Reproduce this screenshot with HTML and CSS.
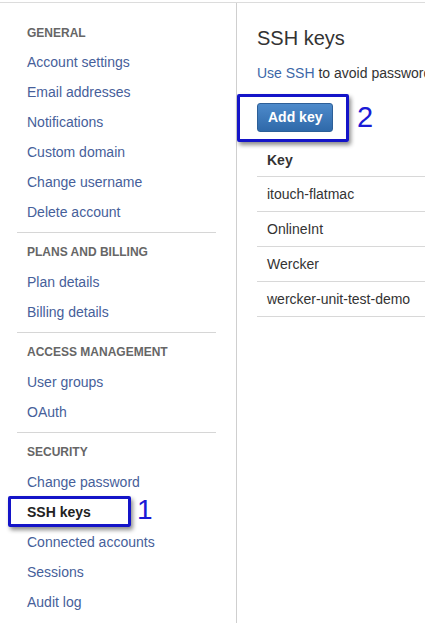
FILE: index.html
```html
<!DOCTYPE html>
<html lang="en">
<head>
<meta charset="utf-8">
<title>SSH keys</title>
<link rel="stylesheet" href="styles.css">
</head>
<body>
<div class="page">
  <nav class="sidebar">
    <section class="nav-section">
      <h3 class="nav-heading">GENERAL</h3>
      <ul class="nav-list">
        <li><a href="#">Account settings</a></li>
        <li><a href="#">Email addresses</a></li>
        <li><a href="#">Notifications</a></li>
        <li><a href="#">Custom domain</a></li>
        <li><a href="#">Change username</a></li>
        <li><a href="#">Delete account</a></li>
      </ul>
    </section>
    <section class="nav-section">
      <h3 class="nav-heading">PLANS AND BILLING</h3>
      <ul class="nav-list">
        <li><a href="#">Plan details</a></li>
        <li><a href="#">Billing details</a></li>
      </ul>
    </section>
    <section class="nav-section">
      <h3 class="nav-heading">ACCESS MANAGEMENT</h3>
      <ul class="nav-list">
        <li><a href="#">User groups</a></li>
        <li><a href="#">OAuth</a></li>
      </ul>
    </section>
    <section class="nav-section">
      <h3 class="nav-heading">SECURITY</h3>
      <ul class="nav-list">
        <li><a href="#">Change password</a></li>
        <li class="active"><span class="active-label">SSH keys</span><span class="annot annot-nav"></span><span class="annot-num num-1">1</span></li>
        <li><a href="#">Connected accounts</a></li>
        <li><a href="#">Sessions</a></li>
        <li><a href="#">Audit log</a></li>
      </ul>
    </section>
  </nav>
  <main class="content">
    <h2 class="title">SSH keys</h2>
    <p class="intro"><a href="#">Use SSH</a> to avoid password prompts when you push code to Bitbucket</p>
    <div class="add-key">
      <button class="btn">Add key</button>
      <span class="annot annot-btn"></span>
      <span class="annot-num num-2">2</span>
    </div>
    <table class="keys">
      <thead>
        <tr><th>Key</th></tr>
      </thead>
      <tbody>
        <tr><td>itouch-flatmac</td></tr>
        <tr><td>OnlineInt</td></tr>
        <tr><td>Wercker</td></tr>
        <tr><td>wercker-unit-test-demo</td></tr>
      </tbody>
    </table>
  </main>
</div>
</body>
</html>
```

FILE: styles.css
```css
html, body {
  margin: 0;
  padding: 0;
  background: #fff;
  overflow: hidden;
}
body {
  font-family: "Liberation Sans", Arial, Helvetica, sans-serif;
  font-size: 14px;
  color: #333;
  padding-top: 2px;
}
.page {
  display: flex;
  width: 720px;
  min-height: 621px;
  border-top: 1px solid #dcdcdc;
}
.sidebar {
  box-sizing: border-box;
  width: 237px;
  flex: none;
  padding: 16px 20px 0 17px;
  border-right: 1px solid #cfcfcf;
}
.nav-section + .nav-section {
  margin-top: 5px;
  padding-top: 5px;
  border-top: 1px solid #d6d6d6;
}
.nav-heading {
  margin: 0;
  padding-left: 10px;
  font-size: 12px;
  font-weight: bold;
  color: #666;
  line-height: 29px;
}
.nav-section:first-child .nav-heading {
  line-height: 28px;
}
.nav-list {
  list-style: none;
  margin: 0;
  padding: 0;
}
.nav-list li {
  position: relative;
  padding-left: 10px;
  line-height: 30px;
  height: 30px;
}
.nav-list a {
  color: #46609a;
  text-decoration: none;
}
.active-label {
  font-weight: bold;
  color: #222;
}
.annot {
  position: absolute;
  box-sizing: border-box;
  border: 3px solid #1414c8;
  border-radius: 2px;
  box-shadow: 2px 3px 4px rgba(0, 0, 0, 0.45);
}
.annot-nav {
  left: -9px;
  top: -1px;
  width: 123px;
  height: 31px;
}
.annot-num {
  position: absolute;
  font-size: 28px;
  line-height: 28px;
  color: #1a1ad6;
}
.num-1 {
  left: 120px;
  top: -1px;
}
.content {
  flex: 1;
  padding-left: 20px;
}
.title {
  margin: 23px 0 0;
  font-size: 20px;
  font-weight: normal;
  line-height: 24px;
  color: #333;
}
.intro {
  margin: 13px 0 0;
  line-height: 20px;
  white-space: nowrap;
}
.intro a {
  color: #3c67a8;
  text-decoration: none;
}
.add-key {
  position: relative;
  display: inline-block;
  margin-top: 20px;
  vertical-align: top;
}
.btn {
  display: block;
  height: 29px;
  padding: 0 10px;
  border: 1px solid #2d5f98;
  border-radius: 3px;
  background: linear-gradient(#4d8acb, #2f69a9);
  color: #fff;
  font-family: inherit;
  font-size: 14px;
  font-weight: bold;
  line-height: 27px;
}
.annot-btn {
  left: -20px;
  top: -9px;
  width: 112px;
  height: 48px;
}
.num-2 {
  left: 100px;
  top: 0;
  font-size: 29px;
}
.keys {
  margin-top: 12px;
  width: 420px;
  border-collapse: collapse;
}
.keys th,
.keys td {
  text-align: left;
  padding: 0 10px;
  border-bottom: 1px solid #d8d8d8;
}
.keys th {
  height: 32px;
  font-weight: bold;
  color: #333;
}
.keys td {
  height: 34px;
  color: #333;
}
```
